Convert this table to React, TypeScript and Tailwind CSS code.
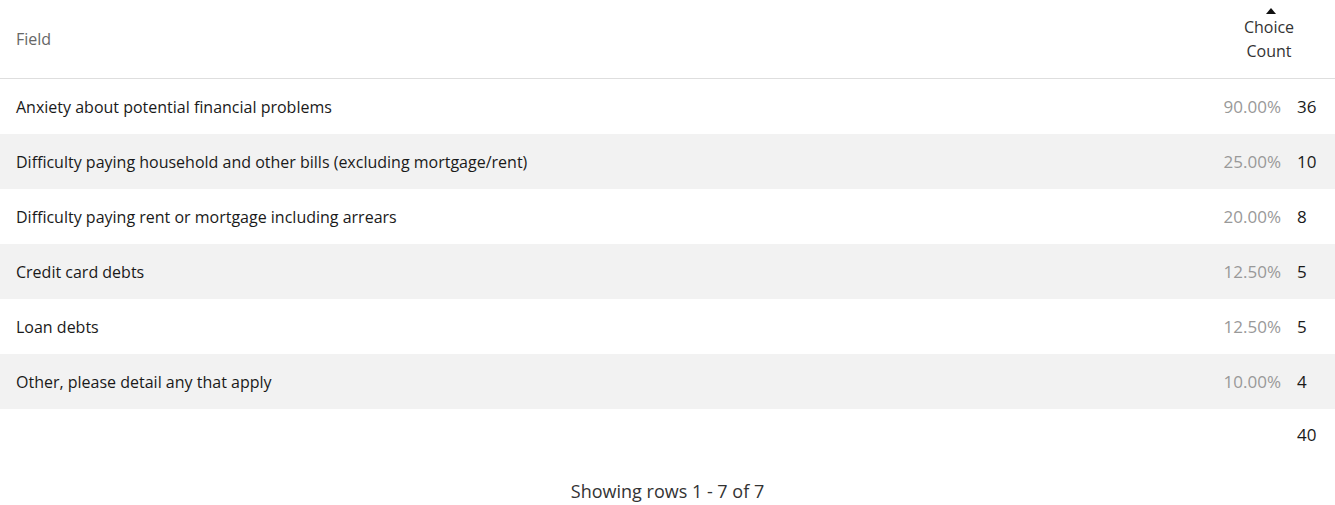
export default function App() {
  const rows = [
    { label: "Anxiety about potential financial problems", pct: "90.00%", count: 36 },
    { label: "Difficulty paying household and other bills (excluding mortgage/rent)", pct: "25.00%", count: 10 },
    { label: "Difficulty paying rent or mortgage including arrears", pct: "20.00%", count: 8 },
    { label: "Credit card debts", pct: "12.50%", count: 5 },
    { label: "Loan debts", pct: "12.50%", count: 5 },
    { label: "Other, please detail any that apply", pct: "10.00%", count: 4 },
  ];

  return (
    <div className="w-[1335px] h-[505px] bg-white text-[#1a1a1a] font-['Open_Sans',sans-serif]">
      {/* header */}
      <div className="flex items-center h-[79px] border-b border-[#dedede]">
        <div className="flex-1 pl-4 text-[16px] text-[#666]">Field</div>
        <div className="w-[132px] -mt-2 flex flex-col items-center text-[16px] leading-6 text-[#333]">
          <svg width="10" height="6" viewBox="0 0 10 6" className="mb-[1px] ml-1">
            <path d="M0 6 L5 0 L10 6 Z" fill="#111" />
          </svg>
          <span>Choice</span>
          <span>Count</span>
        </div>
      </div>

      {rows.map((r, i) => (
        <div
          key={r.label}
          className={`flex items-center h-[55px] text-[16px] ${i % 2 === 1 ? "bg-[#f2f2f2]" : "bg-white"}`}
        >
          <div className="flex-1 pl-4">{r.label}</div>
          <div className="text-right text-[17px] text-[#999]">{r.pct}</div>
          <div className="w-[54px] pl-4 text-[17px]">{r.count}</div>
        </div>
      ))}

      <div className="flex items-center h-[52px] text-[17px]">
        <div className="flex-1" />
        <div className="w-[54px] pl-4">40</div>
      </div>

      <div className="flex justify-center pt-[17px] text-[18px] text-[#333]">Showing rows 1 - 7 of 7</div>
    </div>
  );
}
